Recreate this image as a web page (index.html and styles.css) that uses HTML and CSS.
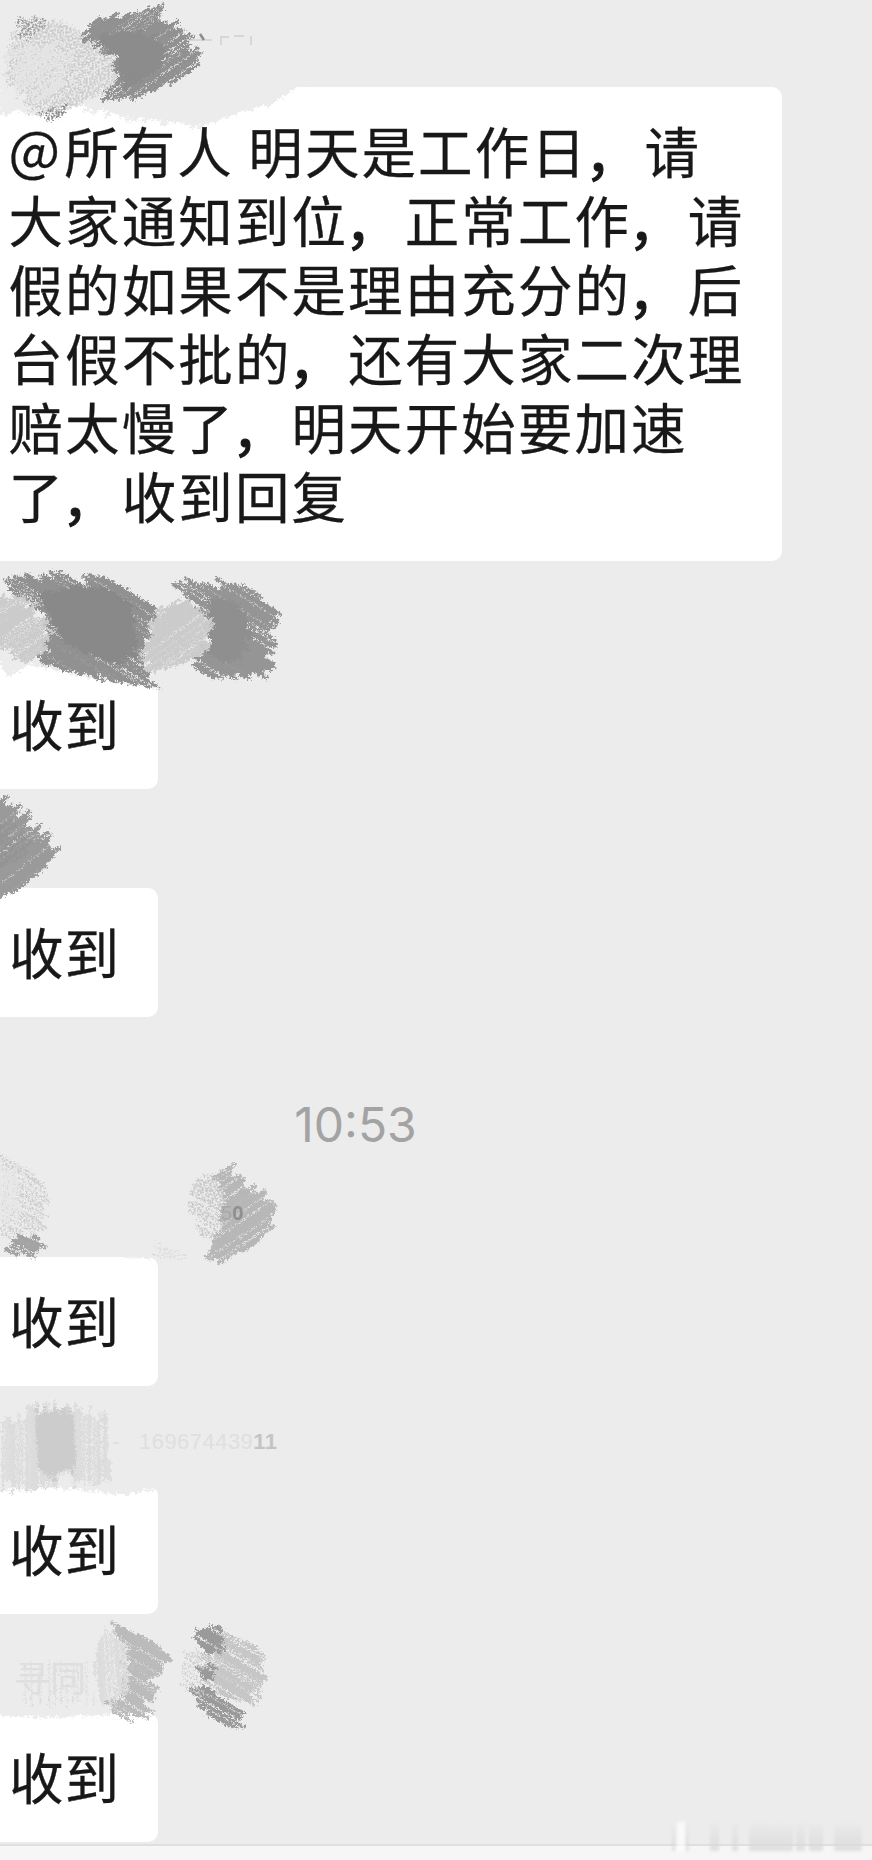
FILE: index.html
```
<!DOCTYPE html>
<html lang="zh-CN">
<head>
<meta charset="utf-8">
<title>群聊</title>
<link rel="stylesheet" href="styles.css">
</head>
<body>
<main class="chat">
  <section class="message first">
    <div class="bubble long">
      <p><span class="at">@</span>所有人 明天是工作日<i>，</i>请</p>
      <p>大家通知到位<i>，</i>正常工作<i>，</i>请</p>
      <p>假的如果不是理由充分的<i>，</i>后</p>
      <p>台假不批的<i>，</i>还有大家二次理</p>
      <p>赔太慢了<i>，</i>明天开始要加速</p>
      <p>了<i>，</i>收到回复</p>
    </div>
  </section>
  <section class="message"><div class="bubble">收到</div></section>
  <section class="message"><div class="bubble">收到</div></section>
  <time class="time">10:53</time>
  <section class="message"><div class="bubble">收到</div></section>
  <section class="message"><div class="bubble">收到</div></section>
  <section class="message"><div class="bubble">收到</div></section>
  <footer class="input-bar"></footer>
  <svg class="scribbles" viewBox="0 0 872 1860" aria-hidden="true">
    <defs>
      <filter id="rough" x="0" y="0" width="872" height="1860" filterUnits="userSpaceOnUse">
        <feTurbulence type="fractalNoise" baseFrequency="0.4" numOctaves="3" seed="4" result="n"/>
        <feDisplacementMap in="SourceGraphic" in2="n" scale="8" xChannelSelector="R" yChannelSelector="G"/>
      </filter>
      <filter id="grain" x="0" y="0" width="872" height="1860" filterUnits="userSpaceOnUse">
        <feTurbulence type="fractalNoise" baseFrequency="0.5" numOctaves="2" seed="9" result="n"/>
        <feDisplacementMap in="SourceGraphic" in2="n" scale="9" xChannelSelector="R" yChannelSelector="G" result="d"/>
        <feColorMatrix in="n" type="matrix" values="0 0 0 0 0  0 0 0 0 0  0 0 0 0 0  0 0 0 5 -1.9" result="m"/>
        <feComposite in="d" in2="m" operator="in"/>
      </filter>
      <filter id="soft" x="-20%" y="-20%" width="140%" height="140%"><feGaussianBlur stdDeviation="1.8"/></filter>
      <linearGradient id="fade" x1="0" y1="0" x2="0" y2="1">
        <stop offset="0" stop-color="#d8d8d8" stop-opacity="0"/>
        <stop offset="1" stop-color="#d8d8d8" stop-opacity=".8"/>
      </linearGradient>
    </defs>
    <g id="strokes"></g>
    <g class="ghost-marks">
      <path d="M190 40h22M221 45v-8h8M234 36h10M251 36v9"/>
      <path class="tick" d="M200 34l4 6"/>
    </g>
    <text class="ghost zero" x="221" y="1220">5<tspan class="strong">0</tspan></text>
    <text class="ghost digits" x="112" y="1449">-</text>
    <text class="ghost digits" x="139" y="1449" textLength="138">169674439<tspan class="strong">11</tspan></text>
    <text class="ghost name" x="14" y="1692">寻同</text>
    <g class="watermark" filter="url(#soft)">
      <path class="white" d="M677 1822h8v29h-8z"/>
      <path d="M672 1822h3v29h-3zM686 1822h3v29h-3zM710 1822h9v29h-9zM732 1820h6v31h-6zM749 1822h20v29h-20zM769 1824h24v27h-24zM796 1822h9v29h-9zM809 1824h14v27h-14zM834 1824h28v27h-28z"/>
    </g>
  </svg>
</main>
<script src="scribbles.js"></script>
</body>
</html>
```
FILE: styles.css
```
* { box-sizing: border-box; }
body { margin: 0; background: #ececec; }
.chat {
  position: relative;
  display: flex;
  flex-direction: column;
  align-items: flex-start;
  height: 1860px;
  overflow: hidden;
  background: #ececec;
  color: #181818;
  font-family: "Noto Sans CJK SC", sans-serif;
}
.message { padding-top: 99px; }
.message.first { padding-top: 87px; }
.bubble {
  width: 158px;
  height: 129px;
  padding: 28px 0 32px 9px;
  border-radius: 0 10px 10px 0;
  background: #fff;
  font-size: 54.5px;
  line-height: 69px;
  letter-spacing: 0.9px;
  white-space: nowrap;
  -webkit-text-stroke: 0.3px #181818;
}
.bubble.long { width: 782px; height: 474px; padding-left: 8.5px; letter-spacing: 2.1px; }
.bubble p { margin: 0; }
.bubble i {
  display: inline-block;
  font-style: normal;
  transform: translate(-3px, 2px);
  -webkit-text-stroke-width: 1.2px;
}
.at { display: inline-block; margin-right: 2px; transform: translateY(-2px); }
.time {
  width: 711px;
  height: 141px;
  padding-top: 78px;
  color: #a3a3a3;
  font: 400 48px/60px Inter, sans-serif;
  text-align: center;
}
.input-bar {
  width: 100%;
  flex: 1;
  margin-top: 2px;
  border-top: 2px solid #dfdfdf;
  background: #f5f6f5;
}
.scribbles { position: absolute; inset: 0; width: 872px; height: 1860px; }
.ghost { fill: #dfdfdf; font-family: "Liberation Sans", sans-serif; }
.zero { font-size: 20px; fill: #a8a8a8; }
.digits { font-size: 22px; }
.digits .strong { fill: #c4c4c4; font-weight: 700; }
.zero .strong { fill: #8f8f8f; font-weight: 700; }
.name { font-family: "Noto Sans CJK SC", sans-serif; font-size: 36px; }
.ghost-marks { fill: none; stroke: #cfcfcf; stroke-width: 1.5; }
.ghost-marks .tick { stroke: #8c8c8c; stroke-width: 2.5; }
.watermark { fill: url(#fade); }
.watermark .white { fill: #fff; opacity: .7; }
```
FILE: scribbles.js
```
// Fills each outline with parallel pencil strokes whose ends overshoot at random.
let seed = 7;
function rnd() { seed = (seed * 16807) % 2147483647; return seed / 2147483647; }

// [colour, angle in degrees, line gap, line width, overshoot, filter, outline, solid base]
const marks = [
  // smears under the strokes
  ['#ececec', -35, 3, 3.4, 16, 'rough', '0,84 0,116 15,110 35,116 60,106 85,106 128,116 195,124 215,122 240,110 270,104 304,84', 1],
  ['#ececec', 30, 3, 4, 2, 'rough', '0,656 0,664 8,676 30,664 100,680 140,684 164,690 164,656', 1],
  ['#ececec', -30, 3, 4, 8, 'rough', '0,1482 0,1490 40,1486 75,1488 105,1490 120,1494 156,1488 162,1482', 1],
  ['#ececec', 10, 3, 3, 3, 'rough', '105,1254 125,1257 150,1258 150,1254', 1],
  ['#ececec', 90, 3, 3, 3, 'rough', '0,1710 0,1715 60,1717 110,1714 110,1710', 1],
  // row 1
  ['#cccccc', -35, 3, 2.8, 12, 'grain', '14,32 50,22 90,34 118,58 118,88 85,100 62,112 40,114 8,80'],
  ['#e4e4e4', -35, 4, 3, 22, 'rough', '14,50 45,42 66,58 68,85 44,98 14,86'],
  ['#989898', -35, 3, 2.6, 6, 'grain', '18,19 42,18 48,26 20,42'],
  ['#8c8c8c', -35, 3, 3, 5, 'grain', '40,114 68,104 64,114 50,121'],
  ['#919191', -35, 3.3, 3.4, 15, 'rough', '84,32 100,18 112,16 118,21 136,11 155,5 166,18 183,31 190,46 198,54 192,70 164,88 138,98 120,95 100,104 97,100 120,82 116,55 94,42'],
  ['#8c8c8c', -35, 3, 3.4, 14, 'rough', '102,36 125,32 142,34 166,46 162,66 144,78 132,88 122,80 118,56 98,42', 1],
  // row 2
  ['#919191', 31, 3.4, 3.5, 16, 'rough', '10,584 27,574 40,580 63,573 80,582 102,577 128,589 146,602 154,612 146,628 142,648 144,668 154,684 130,683 95,677 60,667 36,666 50,640 48,620 25,600 8,594'],
  ['#898989', 31, 3, 3.6, 14, 'rough', '40,594 70,590 105,588 132,604 132,655 110,662 70,646 53,622', 1],
  ['#cbcbcb', -35, 2.8, 2.9, 13, 'rough', '-6,598 20,598 36,612 50,632 44,652 28,660 -6,645'],
  ['#959595', 31, 3.4, 3.5, 17, 'rough', '180,588 193,580 214,587 230,580 252,591 272,605 282,616 272,625 275,638 268,648 269,666 260,676 236,677 210,677 192,665 210,645 213,630 196,604'],
  ['#8f8f8f', 31, 3.2, 3.6, 16, 'rough', '208,598 232,602 248,620 242,652 226,662 208,652 214,630', 1],
  ['#cbcbcb', -35, 2.8, 2.9, 13, 'rough', '154,612 175,600 193,606 210,626 204,652 178,664 150,674 144,655'],
  // row 3
  ['#9a9a9a', -38, 3.3, 3.6, 14, 'rough', '-8,800 10,800 24,816 36,830 48,840 54,850 49,868 27,886 -8,900'],
  ['#949494', -38, 3.8, 3, 16, 'rough', '-8,820 10,828 26,845 18,862 -8,872'],
  // row 4
  ['#cdcdcd', 30, 4, 2.4, 10, 'grain', '0,1155 30,1172 46,1185 45,1232 0,1238'],
  ['#e7e7e7', 90, 3.4, 3, 12, 'rough', '0,1166 18,1170 20,1215 0,1218'],
  ['#a3a3a3', 24, 3.8, 3.4, 11, 'rough', '20,1233 38,1238 42,1246 34,1257 14,1256 3,1248'],
  ['#c8c8c8', 30, 3.6, 2.6, 12, 'grain', '205,1174 225,1172 230,1210 218,1242 196,1234 192,1195'],
  ['#b7b7b7', -34, 3.3, 3.5, 13, 'rough', '216,1173 231,1167 242,1183 258,1193 273,1206 273,1222 266,1235 246,1249 222,1262 208,1255 220,1230 226,1205'],
  ['#d8d8d8', 10, 4, 2, 8, 'grain', '155,1242 180,1248 184,1260 158,1260'],
  // row 5
  ['#dcdcdc', 90, 3, 2.6, 18, 'rough', '0,1422 34,1412 70,1412 106,1416 110,1474 75,1478 35,1482 0,1488'],
  ['#cccccc', 90, 3, 2.8, 16, 'rough', '36,1416 48,1412 74,1416 75,1466 55,1474 38,1468', 1],
  // row 6
  ['#dadada', 90, 7, 2, 8, 'grain', '16,1664 50,1664 92,1660 94,1704 18,1708'],
  ['#bbbbbb', 30, 3.3, 3.6, 16, 'rough', '110,1623 134,1633 156,1645 167,1657 157,1672 151,1686 148,1704 143,1718 125,1718 105,1709 126,1690 124,1640'],
  ['#dcdcdc', 86, 3.2, 2.8, 14, 'rough', '98,1638 112,1630 125,1640 128,1690 118,1702 102,1700 94,1670'],
  ['#c6c6c6', 30, 3.2, 2.6, 18, 'rough', '220,1630 243,1640 262,1652 262,1670 256,1684 252,1704 215,1694 204,1665'],
  ['#9a9a9a', 30, 3.8, 3.4, 12, 'rough', '210,1623 222,1628 219,1652 210,1658 196,1642 200,1632'],
  ['#9a9a9a', 30, 3.8, 3.4, 9, 'rough', '198,1660 213,1667 209,1684 200,1680'],
  ['#9a9a9a', 30, 3.8, 3.4, 14, 'rough', '198,1684 210,1690 246,1713 242,1725 226,1726 196,1706 193,1696'],
  ['#cccccc', 30, 4, 2.4, 10, 'grain', '186,1654 200,1650 202,1696 184,1692']
];

const NS = 'http://www.w3.org/2000/svg';
const root = document.getElementById('strokes');

for (const [color, angle, gap, width, over, filter, outline, solid] of marks) {
  const pts = outline.split(' ').map(p => p.split(',').map(Number));
  const a = angle * Math.PI / 180, c = Math.cos(a), s = Math.sin(a);
  const rot = pts.map(([x, y]) => [x * c + y * s, -x * s + y * c]);
  const vs = rot.map(p => p[1]);
  let d = '';
  for (let v = Math.min(...vs) + 0.5; v < Math.max(...vs); v += gap * (0.6 + 0.8 * rnd())) {
    const hits = [];
    rot.forEach(([u1, v1], i) => {
      const [u2, v2] = rot[(i + 1) % rot.length];
      if ((v1 <= v) !== (v2 <= v)) hits.push(u1 + (v - v1) / (v2 - v1) * (u2 - u1));
    });
    hits.sort((p, q) => p - q);
    for (let i = 0; i + 1 < hits.length; i += 2) {
      const u1 = hits[i] - over * (rnd() - 0.4), u2 = hits[i + 1] + over * (rnd() - 0.4);
      if (u2 <= u1) continue;
      d += `M${(u1 * c - v * s).toFixed(1)} ${(u1 * s + v * c).toFixed(1)}L${(u2 * c - v * s).toFixed(1)} ${(u2 * s + v * c).toFixed(1)}`;
    }
  }
  const g = document.createElementNS(NS, 'g');
  g.setAttribute('filter', `url(#${filter})`);
  if (solid) {
    const base = document.createElementNS(NS, 'polygon');
    base.setAttribute('points', outline);
    base.setAttribute('fill', color);
    g.append(base);
  }
  const path = document.createElementNS(NS, 'path');
  path.setAttribute('d', d);
  path.setAttribute('stroke', color);
  path.setAttribute('stroke-width', width);
  path.setAttribute('fill', 'none');
  g.append(path);
  root.append(g);
}
```
